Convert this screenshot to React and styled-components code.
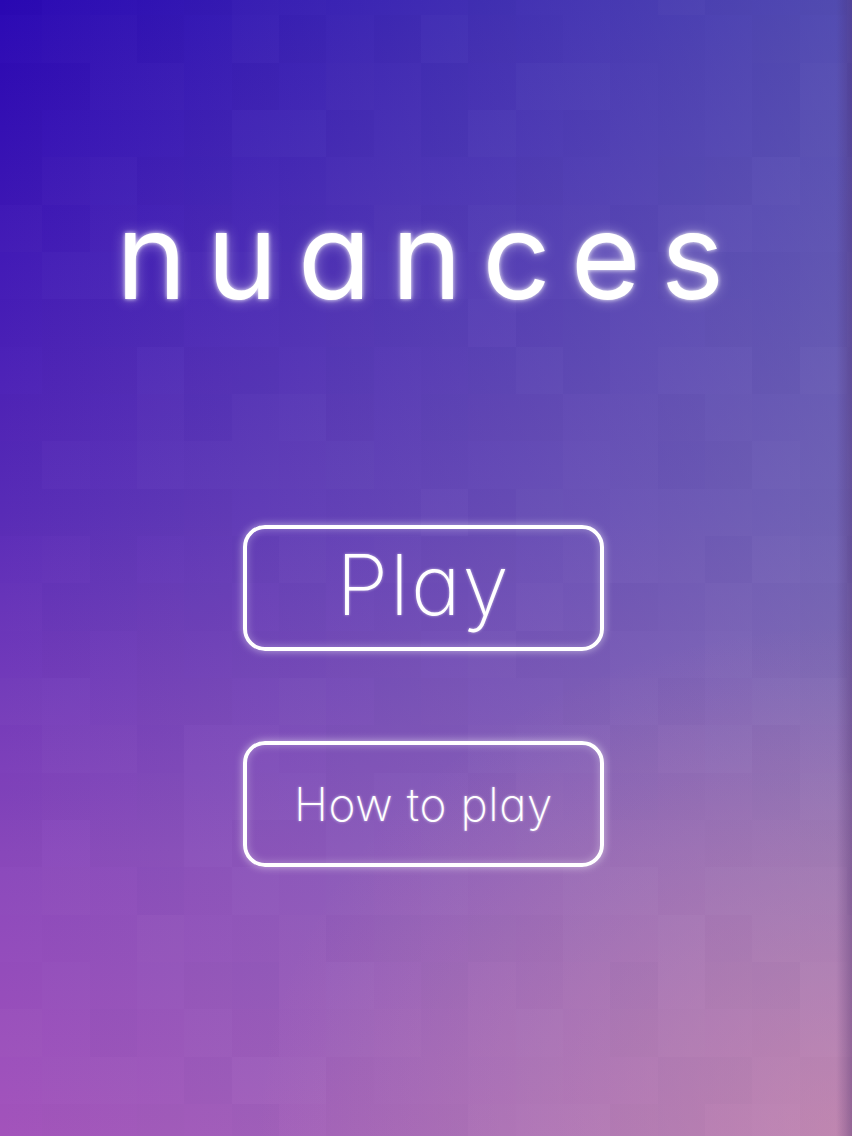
import styled, { createGlobalStyle } from "styled-components";

const GlobalStyle = createGlobalStyle`
html, body {
    margin: 0;
    padding: 0;
    width: 100%;
    height: 100%;
    overflow: hidden;
}
#root {
    height: 100%;
}
`;

const Screen = styled.div`
position: relative;
width: 852px;
height: 1136px;
overflow: hidden;
font-family: Inter, "Noto Sans", sans-serif;
font-feature-settings: "cv11";
color: #fff;
background:
    linear-gradient(90deg, rgba(255, 170, 190, 0) 0%, rgba(150, 190, 175, 0.38) 100%),
    linear-gradient(180deg, #2a08b4 0%, #5a2cb8 45%, #8a48bc 75%, #a454bc 100%);
`;

// soft pinkish wash in the lower right corner
const Wash = styled.div`
position: absolute;
inset: 0;
background: radial-gradient(ellipse 70% 45% at 100% 100%, rgba(235, 150, 170, 0.45), rgba(235, 150, 170, 0) 100%);
`;

// mosaic of faint squares over the gradient
const Mosaic = styled.div`
position: absolute;
top: -32px;
left: -5px;
display: grid;
grid-template-columns: repeat(19, 47.33px);
grid-auto-rows: 47.33px;
`;

const Tile = styled.div`
background: ${props => props.$light ? `rgba(255,255,255,${props.$alpha})` : `rgba(20,0,60,${props.$alpha})`};
`;

// darker strip at the right edge
const EdgeShade = styled.div`
position: absolute;
top: 0;
right: 0;
width: 16px;
height: 100%;
background: linear-gradient(90deg, rgba(70, 40, 100, 0) 0%, rgba(70, 40, 100, 0.35) 100%);
`;

const Content = styled.div`
position: relative;
display: flex;
flex-direction: column;
align-items: center;
padding-top: 181px;
`;

const Title = styled.h1`
margin: 0 -20px 0 -12px;
font-weight: 400;
font-size: 120px;
line-height: 150px;
letter-spacing: 20px;
text-shadow: 0 0 4px rgba(255,255,255,0.9), 0 0 14px rgba(255,255,255,0.45);
`;

const Menu = styled.div`
display: flex;
flex-direction: column;
align-items: center;
gap: 90px;
margin: 194px 0 0 -5px;
`;

const MenuButton = styled.button`
box-sizing: border-box;
width: 361px;
height: 126px;
background: transparent;
border: 4px solid #fff;
border-radius: 22px;
color: #fff;
font-family: inherit;
font-feature-settings: "cv11";
font-weight: 200;
font-size: ${props => props.$size}px;
letter-spacing: ${props => props.$spacing}px;
cursor: pointer;
box-shadow: 0 0 8px rgba(255,255,255,0.55), inset 0 0 8px rgba(255,255,255,0.35);
text-shadow: 0 0 3px rgba(255,255,255,0.6);
display: flex;
align-items: center;
justify-content: center;
padding: 0 0 ${props => props.$lift}px;
`;

const seeded = (i) => {
    const x = Math.sin(i * 12.9898 + 78.233) * 43758.5453;
    return x - Math.floor(x);
};

const tiles = Array.from({ length: 19 * 26 }, (_, i) => {
    const r = seeded(i);
    return { light: r > 0.5, alpha: (Math.abs(r - 0.5) * 0.035).toFixed(3) };
});

const App = () => {
    return (
        <Screen>
            <GlobalStyle />
            <Wash />
            <Mosaic>
                {tiles.map((t, i) => (
                    <Tile key={i} $light={t.light} $alpha={t.alpha} />
                ))}
            </Mosaic>
            <EdgeShade />
            <Content>
                <Title>nuances</Title>
                <Menu>
                    <MenuButton $size={84} $spacing={2} $lift={8}>Play</MenuButton>
                    <MenuButton $size={46} $spacing={0.6} $lift={0}>How to play</MenuButton>
                </Menu>
            </Content>
        </Screen>
    );
};

export default App;
